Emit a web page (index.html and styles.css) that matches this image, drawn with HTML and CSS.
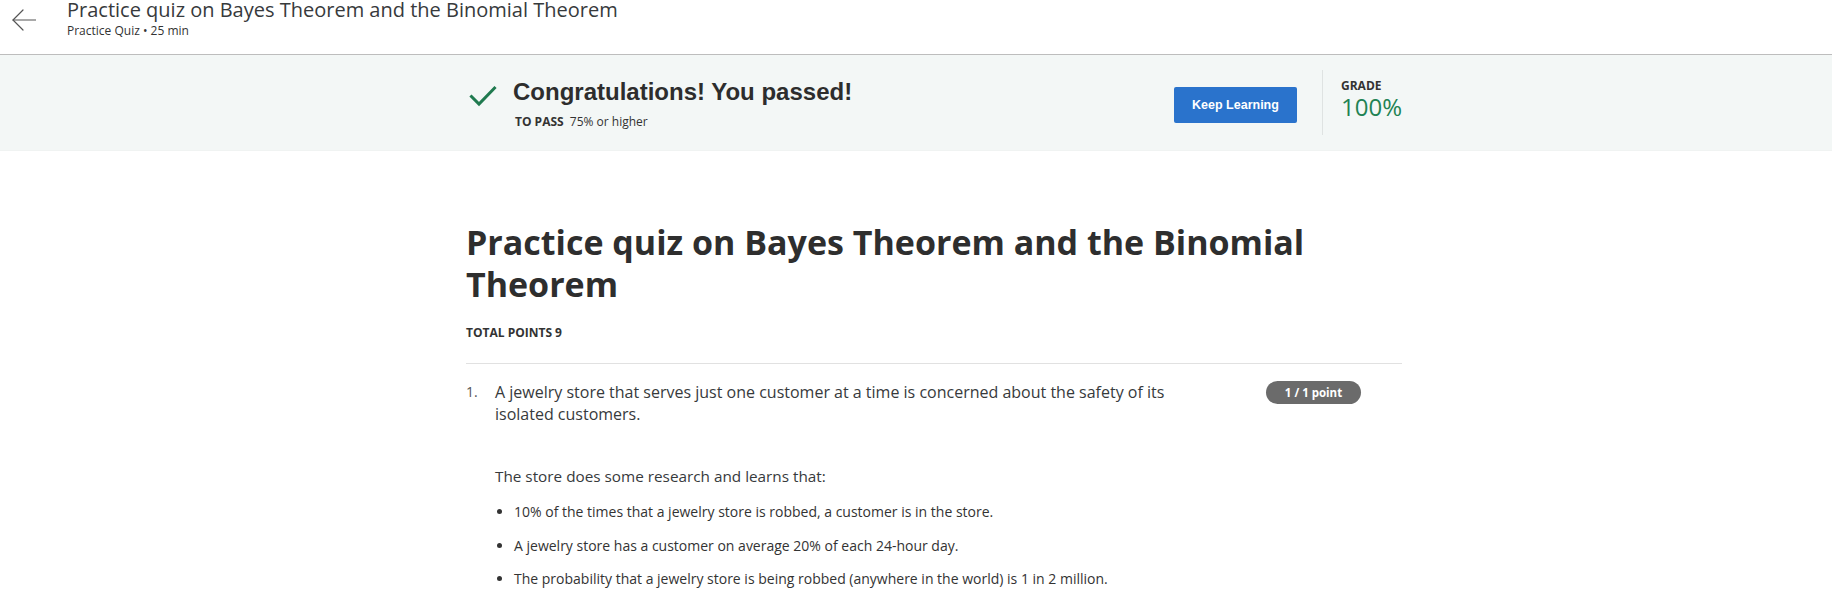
FILE: index.html
```html
<!DOCTYPE html>
<html lang="en">
<head>
<meta charset="utf-8">
<title>Practice quiz on Bayes Theorem and the Binomial Theorem</title>
<link rel="stylesheet" href="styles.css">
</head>
<body>
<header class="topbar">
  <a class="back" aria-label="Back">
    <svg width="24" height="22" viewBox="0 0 24 22" fill="none" stroke="#555" stroke-width="1.2" stroke-linecap="round" stroke-linejoin="round">
      <path d="M23.5 11H1"/>
      <path d="M11 1L1 11l10 10"/>
    </svg>
  </a>
  <div class="titles">
    <div class="page-title">Practice quiz on Bayes Theorem and the Binomial Theorem</div>
    <div class="page-meta">Practice Quiz • 25 min</div>
  </div>
</header>

<section class="banner">
  <div class="container banner-inner">
    <div class="result">
      <svg class="check" width="28" height="22" viewBox="0 0 28 22" fill="none" stroke="#1f7a4f" stroke-width="3" stroke-linecap="square">
        <path d="M2.5 11.5l7.5 7.5L25.5 3"/>
      </svg>
      <div class="result-text">
        <div class="congrats">Congratulations! You passed!</div>
        <div class="topass"><span class="topass-label">TO PASS</span> 75% or higher</div>
      </div>
    </div>
    <div class="actions">
      <button class="keep">Keep Learning</button>
      <div class="divider"></div>
      <div class="grade">
        <div class="grade-label">GRADE</div>
        <div class="grade-value">100%</div>
      </div>
    </div>
  </div>
</section>

<main class="container content">
  <h1 class="quiz-title">Practice quiz on Bayes Theorem and the Binomial Theorem</h1>
  <div class="total">TOTAL POINTS 9</div>
  <hr class="rule">
  <div class="question">
    <div class="qnum">1.</div>
    <div class="qbody">
      <p class="para para-lead">A jewelry store that serves just one customer at a time is concerned about the safety of its isolated customers.</p>
      <p class="para para-gap">The store does some research and learns that:</p>
      <ul class="facts">
        <li>10% of the times that a jewelry store is robbed, a customer is in the store.</li>
        <li>A jewelry store has a customer on average 20% of each 24-hour day.</li>
        <li>The probability that a jewelry store is being robbed (anywhere in the world) is 1 in 2 million.</li>
      </ul>
    </div>
    <div class="badge">1 / 1 point</div>
  </div>
</main>
</body>
</html>
```

FILE: styles.css
```css
* { box-sizing: border-box; }

html, body {
  margin: 0;
  padding: 0;
  background: #fff;
  color: #333;
  font-family: "Open Sans", "Liberation Sans", Arial, sans-serif;
  overflow: hidden;
}

.topbar {
  height: 55px;
  display: flex;
  align-items: flex-start;
  padding-left: 12px;
  border-bottom: 1px solid #bdbdbd;
}

.back {
  display: block;
  width: 24px;
  height: 22px;
  margin-top: 9px;
  margin-right: 31px;
}
.back svg { display: block; }

.titles { display: flex; flex-direction: column; }

.page-title {
  font-size: 20px;
  line-height: 20px;
  font-weight: 400;
  color: #373a3c;
}

.page-meta {
  margin-top: 3px;
  font-size: 12px;
  line-height: 16px;
  color: #333;
}

.banner {
  height: 96px;
  background: #f3f7f6;
  border-bottom: 1px solid #f0f3f2;
}

.container {
  width: 972px;
  margin: 0 auto;
  padding-left: 36px;
}

.banner-inner {
  height: 100%;
  display: flex;
  justify-content: space-between;
  align-items: flex-start;
}

.result {
  display: flex;
  align-items: flex-start;
  margin-top: 23px;
}

.check {
  display: block;
  margin-top: 7px;
  margin-left: 3px;
  margin-right: 16px;
}

.congrats {
  font-family: "Liberation Sans", Arial, sans-serif;
  font-weight: 700;
  font-size: 24px;
  line-height: 28px;
  color: #2d2d2d;
}

.topass {
  margin-top: 8px;
  padding-left: 2px;
  font-size: 12px;
  line-height: 16px;
  color: #333;
}
.topass-label {
  font-weight: 700;
  margin-right: 3px;
}

.actions {
  display: flex;
  align-items: flex-start;
}

.keep {
  margin-top: 32px;
  width: 123px;
  height: 36px;
  border: 0;
  border-radius: 2px;
  background: #2a73cc;
  color: #fff;
  font-family: "Liberation Sans", Arial, sans-serif;
  font-weight: 700;
  font-size: 12.5px;
  padding: 0;
}

.divider {
  width: 1px;
  height: 65px;
  margin-top: 15px;
  margin-left: 25px;
  margin-right: 18px;
  background: #dfe3e2;
}

.grade { margin-top: 23px; }

.grade-label {
  font-size: 12px;
  line-height: 16px;
  font-weight: 700;
  color: #333;
}

.grade-value {
  font-size: 24px;
  line-height: 26px;
  font-weight: 400;
  color: #1f8354;
}

.content { padding-top: 70px; }

.quiz-title {
  margin: 0;
  font-size: 34px;
  line-height: 42px;
  font-weight: 700;
  color: #2e2e2e;
  max-width: 880px;
}

.total {
  margin-top: 20px;
  font-size: 12px;
  line-height: 16px;
  font-weight: 700;
  color: #333;
}

.rule {
  margin: 22px 0 0;
  border: 0;
  height: 1px;
  background: #e1e1e1;
}

.question {
  display: flex;
  align-items: flex-start;
  padding-top: 17px;
}

.qnum {
  width: 29px;
  flex: none;
  font-size: 14px;
  line-height: 22px;
  color: #555;
}

.qbody {
  width: 700px;
  flex: none;
  color: #373a3c;
}

.para {
  margin: 0;
  font-size: 15.3px;
  line-height: 22px;
}

.para-lead { font-size: 16px; }

.para-gap { margin-top: 40px; }

.facts {
  margin: 15px 0 0;
  padding-left: 19px;
  font-size: 14px;
  line-height: 20px;
  color: #333;
}

.facts li { margin-bottom: 13.5px; }

.badge {
  margin-left: auto;
  margin-right: 41px;
  width: 95px;
  height: 23px;
  border-radius: 12px;
  background: #6b6b6b;
  color: #fff;
  font-size: 11.5px;
  font-weight: 700;
  line-height: 23px;
  text-align: center;
}
```
